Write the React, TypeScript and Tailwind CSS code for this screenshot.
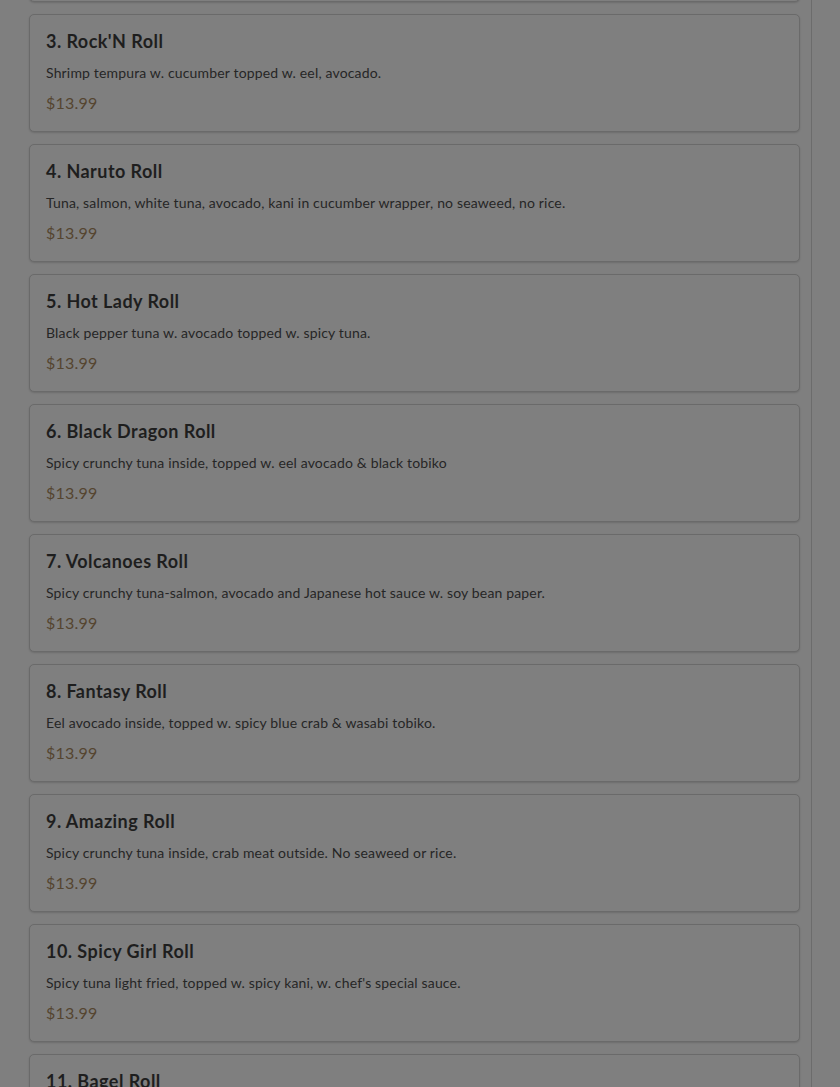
import React from "react";

type Roll = { name: string; desc: string; price: string };

const rolls: Roll[] = [
  { name: "3. Rock'N Roll", desc: "Shrimp tempura w. cucumber topped w. eel, avocado.", price: "$13.99" },
  { name: "4. Naruto Roll", desc: "Tuna, salmon, white tuna, avocado, kani in cucumber wrapper, no seaweed, no rice.", price: "$13.99" },
  { name: "5. Hot Lady Roll", desc: "Black pepper tuna w. avocado topped w. spicy tuna.", price: "$13.99" },
  { name: "6. Black Dragon Roll", desc: "Spicy crunchy tuna inside, topped w. eel avocado & black tobiko", price: "$13.99" },
  { name: "7. Volcanoes Roll", desc: "Spicy crunchy tuna-salmon, avocado and Japanese hot sauce w. soy bean paper.", price: "$13.99" },
  { name: "8. Fantasy Roll", desc: "Eel avocado inside, topped w. spicy blue crab & wasabi tobiko.", price: "$13.99" },
  { name: "9. Amazing Roll", desc: "Spicy crunchy tuna inside, crab meat outside. No seaweed or rice.", price: "$13.99" },
  { name: "10. Spicy Girl Roll", desc: "Spicy tuna light fried, topped w. spicy kani, w. chef's special sauce.", price: "$13.99" },
  { name: "11. Bagel Roll", desc: "Salmon, cream cheese, avocado.", price: "$13.99" },
];

const cardClass =
  "rounded-[5px] border border-[#6a6a6a] bg-[#7f7f7f] shadow-[0_1px_2px_rgba(0,0,0,0.15)]";

function RollCard({ roll }: { roll: Roll }) {
  return (
    <div className={`${cardClass} px-4 pt-3 pb-4`}>
      <h3 className="text-[18px] leading-7 font-bold tracking-[0.45px] text-[#1e1e1e]">{roll.name}</h3>
      <p className="mt-2 text-[14px] leading-5 tracking-[0.16px] text-[#262626]">{roll.desc}</p>
      <p className="mt-2 text-[16px] leading-6 tracking-[0.2px] text-[#554530]">{roll.price}</p>
    </div>
  );
}

export default function App() {
  return (
    <div
      className="flex h-[1087px] overflow-hidden bg-[#7f7f7f]"
      style={{ fontFamily: "Lato, 'Noto Sans', sans-serif" }}
    >
      <div className="w-[812px] shrink-0 border-r border-[#6c6c6c] pl-[29px] pr-[11px]">
        <div className="-mt-[116px] flex flex-col gap-3">
          {/* previous item, scrolled out of view */}
          <div className={`${cardClass} h-[118px]`} />
          {rolls.map((r) => (
            <RollCard key={r.name} roll={r} />
          ))}
        </div>
      </div>
      <div className="flex-1" />
    </div>
  );
}
